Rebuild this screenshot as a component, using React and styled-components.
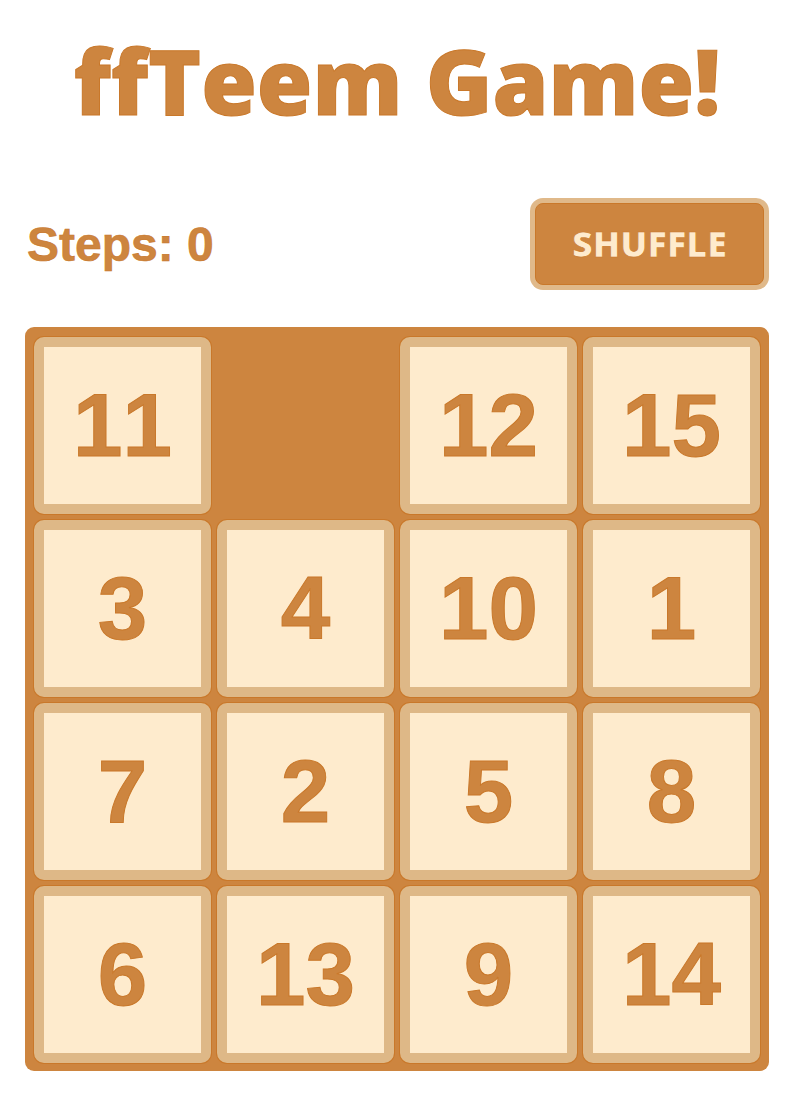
import React from 'react';
import styled, { createGlobalStyle } from 'styled-components';

const GlobalStyle = createGlobalStyle`
  html, body {
    margin: 0;
    padding: 0;
    background: #ffffff;
  }
`;

const Page = styled.div`
  width: 744px;
  margin: 0 auto;
  padding-top: 20px;
  display: flex;
  flex-direction: column;
`;

const Title = styled.h1`
  margin: 0;
  text-align: center;
  font-family: 'Open Sans', sans-serif;
  font-weight: 800;
  font-size: 90px;
  line-height: 120px;
  color: #cd853f;
  -webkit-text-stroke: 1px #c9782a;
`;

const Toolbar = styled.div`
  margin-top: 63px;
  display: flex;
  align-items: center;
  justify-content: space-between;
`;

const Steps = styled.span`
  font-family: 'Liberation Sans', Arial, sans-serif;
  font-weight: 700;
  font-size: 48px;
  color: #cd853f;
  -webkit-text-stroke: 0.6px #c9782a;
  padding-left: 2px;
`;

const ShuffleButton = styled.button`
  width: 229px;
  height: 82px;
  box-sizing: border-box;
  margin-right: 5px;
  padding: 0;
  background: #cd853f;
  border: 1px solid #c9782a;
  border-radius: 8px;
  box-shadow: 0 0 0 5px #e0b98a;
  font-family: 'Open Sans', sans-serif;
  font-weight: 800;
  font-size: 36px;
  line-height: 1;
  color: #feebcd;
  -webkit-text-stroke: 0.7px #c9782a;
  cursor: pointer;
`;

const Board = styled.div`
  margin-top: 42px;
  background: #cd853f;
  border-radius: 9px;
  padding: 10px 9px 8px;
  display: grid;
  grid-template-columns: repeat(4, 177px);
  grid-auto-rows: 177px;
  gap: 6px;
`;

const Tile = styled.div`
  box-sizing: border-box;
  border: 10px solid #deb887;
  border-radius: 10px;
  box-shadow: 0 0 0 1px #c9782a;
  background: #feebcd;
  background-clip: padding-box;
  display: flex;
  align-items: center;
  justify-content: center;
  font-family: 'Liberation Sans', Arial, sans-serif;
  font-weight: 700;
  font-size: 89px;
  font-kerning: none;
  color: #cd853f;
  -webkit-text-stroke: 1px #c9782a;
  visibility: ${(p) => (p.$empty ? 'hidden' : 'visible')};
`;

const tiles = [11, 0, 12, 15, 3, 4, 10, 1, 7, 2, 5, 8, 6, 13, 9, 14];

export default function App() {
  return (
    <>
      <GlobalStyle />
      <Page>
        <Title>ffTeem Game!</Title>
        <Toolbar>
          <Steps>Steps: 0</Steps>
          <ShuffleButton>SHUFFLE</ShuffleButton>
        </Toolbar>
        <Board>
          {tiles.map((n) => (
            <Tile key={n} $empty={n === 0}>
              {n || ''}
            </Tile>
          ))}
        </Board>
      </Page>
    </>
  );
}
